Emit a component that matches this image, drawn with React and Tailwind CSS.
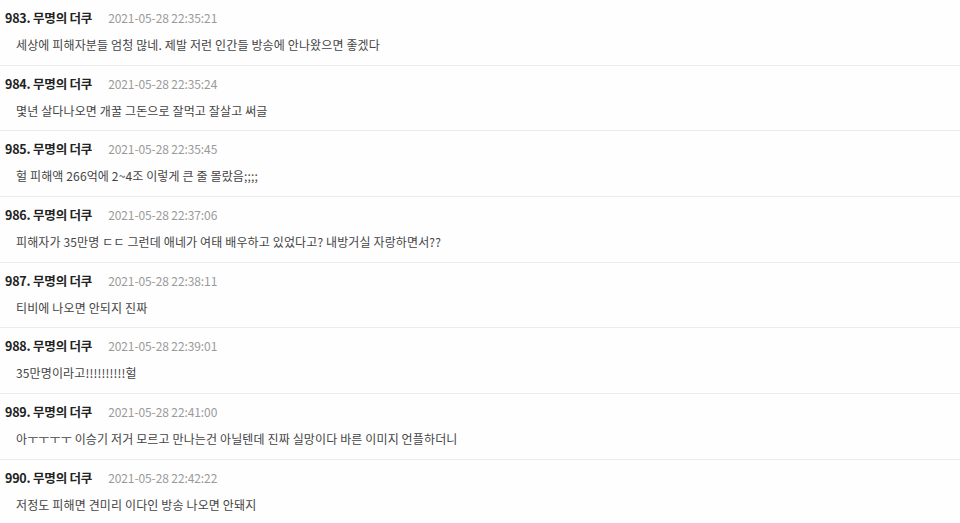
import React from "react";

const comments = [
  { n: 983, d: "2021-05-28 22:35:21", t: "세상에 피해자분들 엄청 많네. 제발 저런 인간들 방송에 안나왔으면 좋겠다" },
  { n: 984, d: "2021-05-28 22:35:24", t: "몇년 살다나오면 개꿀 그돈으로 잘먹고 잘살고 써글" },
  { n: 985, d: "2021-05-28 22:35:45", t: "헐 피해액 266억에 2~4조 이렇게 큰 줄 몰랐음;;;;" },
  { n: 986, d: "2021-05-28 22:37:06", t: "피해자가 35만명 ㄷㄷ 그런데 애네가 여태 배우하고 있었다고? 내방거실 자랑하면서??" },
  { n: 987, d: "2021-05-28 22:38:11", t: "티비에 나오면 안되지 진짜" },
  { n: 988, d: "2021-05-28 22:39:01", t: "35만명이라고!!!!!!!!!!헐" },
  { n: 989, d: "2021-05-28 22:41:00", t: "아ㅜㅜㅜㅜ 이승기 저거 모르고 만나는건 아닐텐데 진짜 실망이다 바른 이미지 언플하더니" },
  { n: 990, d: "2021-05-28 22:42:22", t: "저정도 피해면 견미리 이다인 방송 나오면 안돼지" },
];

export default function App() {
  return (
    <div className="w-[960px] h-[523px] overflow-hidden bg-[#fefefe] font-['Noto_Sans_CJK_KR','Noto_Sans',sans-serif]">
      {comments.map((c) => (
        <div key={c.n} className="h-[65.7px] border-b border-[#ececec] pl-[5px] pt-[9px]">
          <div className="flex items-center h-[18px] leading-[18px]">
            <span className="text-[12.5px] font-bold text-[#222] tracking-[-0.2px]">{c.n}. 무명의 더쿠</span>
            <span className="ml-[16px] text-[12px] text-[#9a9a9a] tracking-[-0.1px]">{c.d}</span>
          </div>
          <div className="mt-[9px] pl-[11px] h-[18px] leading-[18px] text-[12px] text-[#444] tracking-[0.13px]">{c.t}</div>
        </div>
      ))}
    </div>
  );
}
